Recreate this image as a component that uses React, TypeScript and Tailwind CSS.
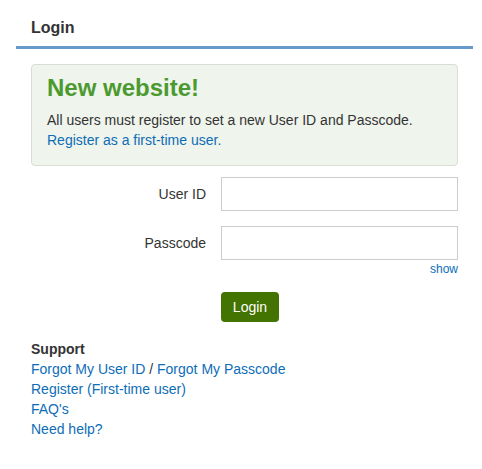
export default function App() {
  const supportLinks = ["Register (First-time user)", "FAQ's", "Need help?"];

  return (
    <div className="w-[482px] h-[469px] bg-white pl-[16px] pr-[9px] font-['Liberation_Sans',Arial,sans-serif] text-[#333333]">
      <div className="px-[15px] pt-[17px] pb-[7px] border-b-[3px] border-[#6799cb]">
        <h2 className="text-[16px] leading-[22px] font-bold">Login</h2>
      </div>

      <div className="px-[15px]">
        <div className="mt-[15px] rounded-[4px] border border-[#d9ddd6] bg-[#eff4ec] px-[15px] pt-[10px] pb-[15px]">
          <h3 className="text-[24px] leading-[26px] font-bold text-[#4b9a2f]">New website!</h3>
          <p className="mt-[9px] text-[14px] leading-[20px]">
            All users must register to set a new User ID and Passcode.
            <br />
            <a href="#" className="text-[#0d6db7]">
              Register as a first-time user.
            </a>
          </p>
        </div>

        <form className="mt-[11px]" onSubmit={(e) => e.preventDefault()}>
          <div className="flex items-center">
            <label className="w-[190px] pr-[15px] text-right text-[14px] leading-[20px]">User ID</label>
            <input type="text" className="flex-1 h-[34px] border border-[#cccccc] bg-white" />
          </div>
          <div className="mt-[15px] flex items-center">
            <label className="w-[190px] pr-[15px] text-right text-[14px] leading-[20px]">Passcode</label>
            <input type="password" className="flex-1 h-[34px] border border-[#cccccc] bg-white" />
          </div>
          <div className="mt-[1px] text-right text-[12px] leading-[16px]">
            <a href="#" className="text-[#0d6db7]">
              show
            </a>
          </div>
          <button
            type="submit"
            className="mt-[15px] ml-[190px] w-[58px] h-[30px] rounded-[4px] bg-[#437300] text-white text-[14px] leading-[20px]"
          >
            Login
          </button>
        </form>

        <div className="mt-[17px] text-[14px] leading-[20px]">
          <p className="font-bold">Support</p>
          <p>
            <a href="#" className="text-[#0d6db7]">Forgot My User ID</a>
            {" / "}
            <a href="#" className="text-[#0d6db7]">Forgot My Passcode</a>
          </p>
          {supportLinks.map((link) => (
            <p key={link}>
              <a href="#" className="text-[#0d6db7]">{link}</a>
            </p>
          ))}
        </div>
      </div>
    </div>
  );
}
